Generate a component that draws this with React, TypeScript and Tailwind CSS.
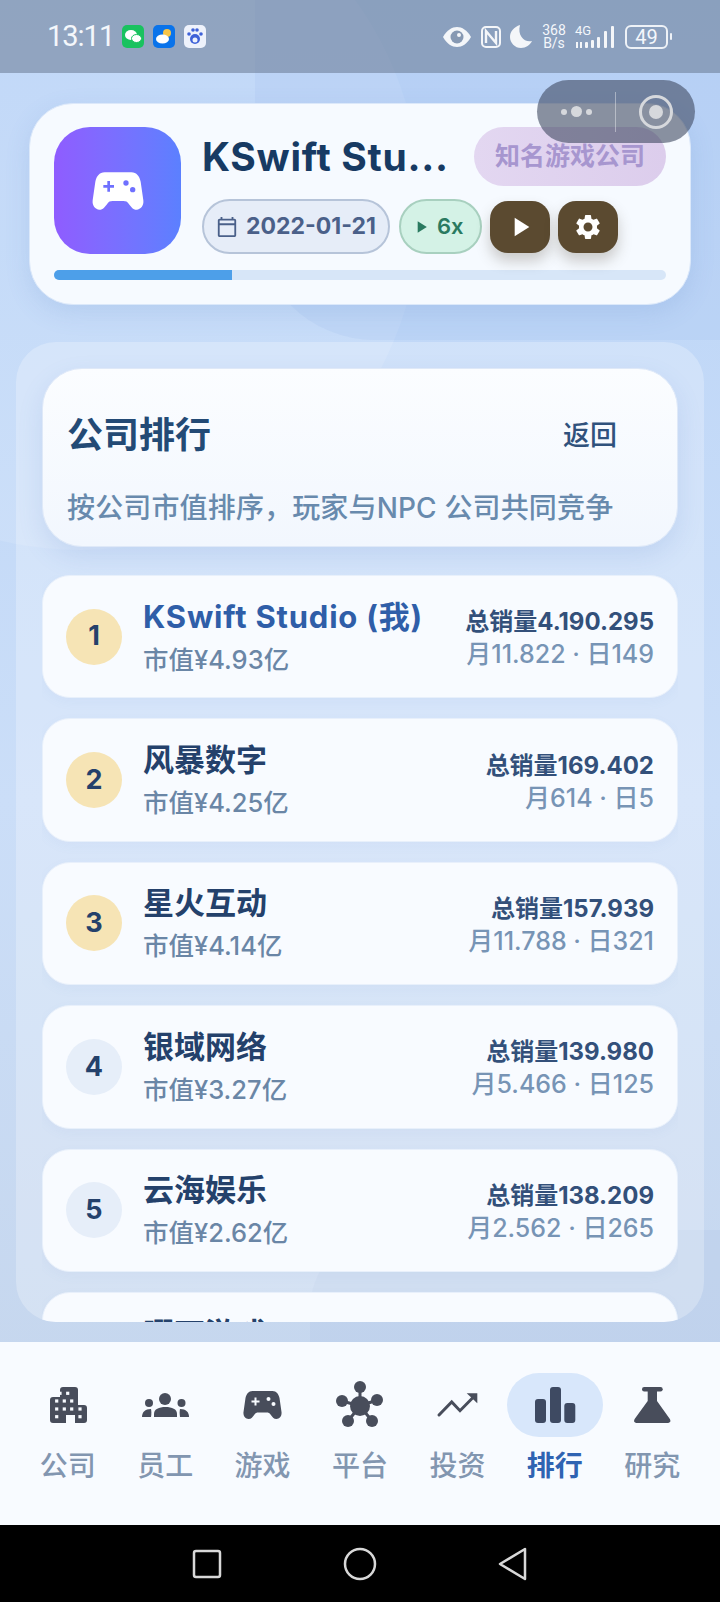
import React from "react";
import { MdPlayArrow, MdSettings, MdOutlineCalendarToday } from "react-icons/md";

const rows = [
  { n: 1, name: "KSwift Studio (我)", cap: "市值¥4.93亿", total: "总销量4.190.295", sub: "月11.822 · 日149", me: true },
  { n: 2, name: "风暴数字", cap: "市值¥4.25亿", total: "总销量169.402", sub: "月614 · 日5" },
  { n: 3, name: "星火互动", cap: "市值¥4.14亿", total: "总销量157.939", sub: "月11.788 · 日321" },
  { n: 4, name: "银域网络", cap: "市值¥3.27亿", total: "总销量139.980", sub: "月5.466 · 日125" },
  { n: 5, name: "云海娱乐", cap: "市值¥2.62亿", total: "总销量138.209", sub: "月2.562 · 日265" },
  { n: 6, name: "曜石游戏", cap: "市值¥2.11亿", total: "总销量120.114", sub: "月1.204 · 日96" },
];

const padPath = "M9 0H29C33 0 35 3 36 7L38 21C38.5 25 36 28 33 28C30 28 29 26 27 23.500C26 22 25 21.500 23 21.500H15C13 21.500 12 22 11 23.500C9 26 8 28 5 28C2 28 -0.500 25 0 21L2 7C3 3 5 0 9 0Z";

function Pad({ w, h, fill, hole }: { w: number; h: number; fill: string; hole: string }) {
  return (
    <svg width={w} height={h} viewBox="-0.5 0 39 28">
      <path d={padPath} fill={fill} />
      <path d="M12 6.500V14.500M8 10.500H16" stroke={hole} strokeWidth="2" />
      <circle cx="25" cy="8" r="2" fill={hole} />
      <circle cx="30" cy="13" r="2" fill={hole} />
    </svg>
  );
}

const C = "#484d5b";
const win = [[16, 12.3], [23.7, 12.3], [12.7, 20], [20.3, 20], [27.7, 20], [12.7, 28], [20.3, 28], [27.7, 28], [36, 28], [12.7, 35.7], [36, 35.7]];

const BuildingIcon = () => (
  <svg width="48" height="48" viewBox="0 0 48 48">
    <path d="M19 6H31C33 6 34 7 34 9V24H40C42 24 43 25 43 27V39C43 41 42 42 40 42H31V34H22V42H9C7 42 6 41 6 39V19C6 17 7 16 9 16H16V9C16 7 17 6 19 6Z" fill={C} />
    {win.map(([x, y]) => <rect key={`${x}-${y}`} x={x - 1.6} y={y - 1.6} width="3.2" height="3.2" fill="#f8fbff" />)}
  </svg>
);
const GroupIcon = () => (
  <svg width="48" height="48" viewBox="0 0 48 48" fill={C}>
    <circle cx="24" cy="18" r="6" /><circle cx="8" cy="22" r="4" /><circle cx="40.500" cy="22" r="4" />
    <path d="M13 36V33C13 28 18 26 24.500 26C31 26 36 28 36 33V36Z" />
    <path d="M1 36C1 31 4 28 10 28C10.500 30 10.500 33 10 36Z" />
    <path d="M48 36C48 31 45 28 39 28C38.500 30 38.500 33 39 36Z" />
  </svg>
);
const PadIcon = () => (
  <div className="w-[48px] h-[48px] flex items-center justify-center"><Pad w={39} h={28} fill={C} hole="#f8fbff" /></div>
);
const HubIcon = () => (
  <svg width="48" height="48" viewBox="0 0 48 48" fill={C}>
    <path d="M24 25L24 6M24 25L6 20M24 25L12 40M24 25L41 19M24 25L36 40" stroke={C} strokeWidth="3" />
    <circle cx="24" cy="25" r="10" /><circle cx="24" cy="6" r="6" /><circle cx="6" cy="20" r="6" /><circle cx="12" cy="40" r="6" /><circle cx="41" cy="19" r="6" /><circle cx="36" cy="40" r="6" />
  </svg>
);
const TrendIcon = () => (
  <svg width="48" height="48" viewBox="0 0 48 48">
    <path d="M6 34L18.700 21L27 29.700L41 15.500" fill="none" stroke={C} strokeWidth="3" strokeLinecap="round" />
    <path d="M33.700 12.300H44.300V22.300Z" fill={C} />
  </svg>
);
const BarsIcon = () => (
  <svg width="48" height="48" viewBox="0 0 48 48" fill="#3e4a62">
    <rect x="4" y="18" width="11" height="24" rx="3" /><rect x="19" y="6" width="11" height="36" rx="3" /><rect x="33.300" y="22" width="11" height="20" rx="3" />
  </svg>
);
const FlaskIcon = () => (
  <svg width="48" height="48" viewBox="0 0 48 48" fill={C}>
    <rect x="14" y="6" width="20.700" height="4.500" rx="2.200" />
    <path d="M19.700 10V20L7 37.500C5 40.500 6.500 42 9.500 42H39C42 42 43.500 40.500 41.500 37.500L29 20V10Z" />
  </svg>
);

const tabs = [
  { label: "公司", Icon: BuildingIcon },
  { label: "员工", Icon: GroupIcon },
  { label: "游戏", Icon: PadIcon },
  { label: "平台", Icon: HubIcon },
  { label: "投资", Icon: TrendIcon },
  { label: "排行", Icon: BarsIcon, active: true },
  { label: "研究", Icon: FlaskIcon },
];

function Row({ r }: { r: (typeof rows)[number] }) {
  return (
    <div className="shrink-0 h-[123.4px] rounded-[28px] bg-[#f8fbff] border border-[#e8f0fb] flex items-center pl-[23px] pr-[23px] shadow-[0_4px_12px_rgba(90,130,190,0.05)]">
      <div className={`w-[56px] h-[56px] shrink-0 rounded-full flex items-center justify-center text-[27px] font-bold text-[#24416b] ${r.n <= 3 ? "bg-[#f6e4b5]" : "bg-[#e6eef9]"}`}>{r.n}</div>
      <div className="ml-[21px] flex flex-col flex-1 min-w-0">
        <div className={`text-[31px] leading-[44px] font-bold whitespace-nowrap ${r.me ? "text-[#2f5ea8] tracking-[0.8px]" : "text-[#24416b]"}`}>{r.name}</div>
        <div className="mt-[2px] text-[25.500px] leading-[38px] font-medium text-[#6a86a6]">{r.cap}</div>
      </div>
      <div className="flex flex-col items-end shrink-0 mt-[3px]">
        <div className="text-[24px] leading-[32px] font-bold text-[#33507a] whitespace-nowrap">{r.total}</div>
        <div className="text-[25px] leading-[32px] font-medium text-[#7794b5] whitespace-nowrap">{r.sub}</div>
      </div>
    </div>
  );
}

function StatusBar() {
  return (
    <div className="relative z-10 h-[73px] shrink-0 bg-[#5f6f87]/50 flex items-center pl-[47px] pr-[48px] text-[#f4f7fb]">
      <span className="font-['Roboto',sans-serif] text-[29px] font-normal tracking-[-1px] w-[75px] leading-none">13:11</span>
      <div className="flex items-center gap-[9px]">
        <svg width="22" height="23" viewBox="0 0 22 23"><rect width="22" height="23" rx="5" fill="#19c25f" /><ellipse cx="9" cy="10" rx="6" ry="5" fill="#fff" /><ellipse cx="14.500" cy="13.500" rx="5" ry="4" fill="#fff" stroke="#19c25f" /></svg>
        <svg width="22" height="23" viewBox="0 0 22 23"><rect width="22" height="23" rx="5" fill="#0a73ea" /><circle cx="14" cy="8" r="4" fill="#f7c548" /><ellipse cx="9.500" cy="14" rx="6.500" ry="4.500" fill="#fff" /></svg>
        <svg width="22" height="23" viewBox="0 0 22 23"><rect width="22" height="23" rx="5" fill="#eef2fb" /><ellipse cx="11" cy="14" rx="5" ry="5" fill="#3f62d8" /><ellipse cx="11" cy="15" rx="2.500" ry="2.500" fill="#eef2fb" /><circle cx="5" cy="9" r="1.800" fill="#3f62d8" /><circle cx="9" cy="5" r="1.800" fill="#3f62d8" /><circle cx="13" cy="5" r="1.800" fill="#3f62d8" /><circle cx="17" cy="9" r="1.800" fill="#3f62d8" /></svg>
      </div>
      <div className="ml-auto flex items-center font-['Roboto',sans-serif]">
        <svg width="30" height="22" viewBox="0 0 30 22"><path d="M1 11C5 4 10 1 15 1s10 3 14 10c-4 7-9 10-14 10S5 18 1 11z" fill="#f4f6f9" /><circle cx="15" cy="11" r="6.500" fill="#8799b3" /><circle cx="17" cy="9" r="2" fill="#f4f6f9" /></svg>
        <svg className="ml-[9px]" width="20" height="22" viewBox="0 0 20 22"><rect x="1" y="1" width="18" height="20" rx="4" fill="none" stroke="#f4f6f9" strokeWidth="2" /><path d="M5 17V5l10 12V5" fill="none" stroke="#f4f6f9" strokeWidth="2.400" /></svg>
        <svg className="ml-[9px]" width="22" height="23" viewBox="0 0 22 23"><path d="M10 0C4 2 0 6.500 0 12c0 6 5 11 11 11 5 0 9-3 11-7-7 2-15-5-12-16z" fill="#f4f6f9" /></svg>
        <div className="ml-[9px] w-[26px] text-center text-[14px] leading-[13px]"><div>368</div><div>B/s</div></div>
        <div className="ml-[8px] relative w-[41px] h-[24px]">
          <span className="absolute left-0 -top-[1px] text-[13px] leading-none">4G</span>
          <svg className="absolute inset-0" width="41" height="24" viewBox="0 0 41 24"><g fill="#f4f6f9"><rect x="1" y="17" width="2" height="6" /><rect x="5" y="17" width="2" height="6" /><rect x="10" y="17" width="3" height="6" rx="1" /><rect x="16" y="15" width="3" height="8" rx="1" /><rect x="22" y="12" width="3" height="11" rx="1" /><rect x="29" y="6" width="3" height="17" rx="1" /><rect x="36" y="1" width="3" height="22" rx="1" /></g></svg>
        </div>
        <div className="ml-[9px] w-[43px] h-[24px] rounded-[6px] border-2 border-[#eef2f7] flex items-center justify-center text-[20px] leading-none">49</div>
        <div className="ml-[2px] w-[2px] h-[7px] rounded-full bg-[#eef2f7]" />
      </div>
    </div>
  );
}

export default function App() {
  return (
    <div className="font-['Inter','Noto_Sans_CJK_SC',sans-serif] relative w-[720px] h-[1602px] overflow-hidden flex flex-col bg-gradient-to-b from-[#bad4f7] via-[#cbdef8] to-[#c4d4ea]">
      {/* background decoration */}
      <div className="absolute -left-[260px] -top-[140px] w-[680px] h-[690px] rounded-full bg-white/10" />
      <div className="absolute left-[255px] -top-[300px] w-[640px] h-[640px] rounded-[120px] bg-[#a8c4ee]/25" />
      <div className="absolute left-[310px] top-[1230px] w-[520px] h-[300px] rounded-[80px] bg-[#b4c8e8]/30" />

      <StatusBar />

      {/* mini program capsule */}
      <div className="absolute z-20 left-[537px] top-[80px] w-[158px] h-[63px] rounded-full bg-[#3f4a60]/60 flex items-center">
        <div className="w-[78px] flex items-center justify-center gap-[4px]">
          <span className="w-[6px] h-[6px] rounded-full bg-[#d6d8dc]" />
          <span className="w-[11px] h-[11px] rounded-full bg-[#d6d8dc]" />
          <span className="w-[6px] h-[6px] rounded-full bg-[#d6d8dc]" />
        </div>
        <div className="w-px h-[40px] bg-white/40" />
        <div className="ml-[23px] w-[34px] h-[34px] rounded-full border-[3px] border-[#d6d8dc] flex items-center justify-center">
          <span className="w-[14px] h-[14px] rounded-full bg-[#d6d8dc]" />
        </div>
      </div>

      <main className="relative flex-1 min-h-0 flex flex-col">
        {/* header card */}
        <section className="mt-[30px] ml-[29px] mr-[29px] h-[202px] shrink-0 rounded-[44px] bg-[#f6faff] border border-[#dbe8fa] shadow-[0_8px_24px_rgba(90,130,200,0.16)] px-[24px] pt-[23px]">
          <div className="flex">
            <div className="w-[127px] h-[127px] shrink-0 rounded-[36px] bg-gradient-to-r from-[#8f5cff] to-[#5b80ff] flex items-center justify-center">
              <Pad w={52} h={38} fill="#fff" hole="#6f70ff" />
            </div>
            <div className="ml-[21px] flex-1 min-w-0">
              <div className="flex items-start justify-between">
                <div className="text-[39px] leading-[60px] font-bold tracking-[0.7px] text-[#173a63] whitespace-nowrap">KSwift Stu...</div>
                <div className="h-[59px] w-[192px] rounded-full bg-gradient-to-r from-[#e3d7f1] to-[#dccdec] flex items-center justify-center text-[25px] font-bold text-[#a796cf]">知名游戏公司</div>
              </div>
              <div className="mt-[12px] flex items-center">
                <div className="h-[55px] w-[188px] rounded-full bg-[#e6edf8] border-2 border-[#b6c4d9] flex items-center pl-[12px] gap-[8px] text-[23px] font-bold text-[#4a6089] whitespace-nowrap">
                  <MdOutlineCalendarToday size={22} className="text-[#4a6089] shrink-0" />
                  2022-01-21
                </div>
                <div className="ml-[9px] h-[55px] w-[83px] rounded-full bg-[#d4f2e6] border-2 border-[#a8d0bf] flex items-center pl-[10px] gap-[6px] text-[22px] font-semibold text-[#2a7a60]">
                  <MdPlayArrow size={20} className="shrink-0" />
                  6x
                </div>
                <div className="ml-[8px] w-[60px] h-[52px] rounded-[18px] bg-[#5b4a30] flex items-center justify-center text-white shadow-[0_8px_14px_rgba(70,60,40,0.25)]"><MdPlayArrow size={32} /></div>
                <div className="ml-[8px] w-[60px] h-[52px] rounded-[18px] bg-[#5b4a30] flex items-center justify-center text-white shadow-[0_8px_14px_rgba(70,60,40,0.25)]"><MdSettings size={30} /></div>
              </div>
            </div>
          </div>
          <div className="mt-[16px] h-[10px] rounded-full bg-[#d7e6f8] overflow-hidden">
            <div className="h-full w-[178px] bg-[#4d9fe9]" />
          </div>
        </section>

        {/* panel */}
        <section className="mt-[37px] mx-[16px] mb-[20px] flex-1 min-h-0 rounded-[40px] bg-white/25 flex flex-col pt-[26px] px-[26px] overflow-hidden">
          <div className="shrink-0 h-[179px] rounded-[40px] bg-gradient-to-b from-[#fbfdff] to-[#f2f7fe] border border-[#dfe9f8] shadow-[0_10px_24px_rgba(90,130,200,0.15)] px-[24px] pt-[44px]">
            <div className="flex items-center justify-between h-[44px]">
              <div className="text-[36px] font-bold text-[#234a75] leading-none">公司排行</div>
              <div className="mr-[36px] text-[27px] font-medium text-[#30527c] leading-none">返回</div>
            </div>
            <div className="mt-[31px] text-[28px] leading-[40px] font-medium tracking-[0.15px] text-[#688aad] whitespace-nowrap">按公司市值排序，玩家与NPC 公司共同竞争</div>
          </div>
          <div className="mt-[28px] flex-1 min-h-0 overflow-hidden flex flex-col gap-[20px]">
            {rows.map((r) => <Row key={r.n} r={r} />)}
          </div>
        </section>
      </main>

      {/* bottom nav */}
      <nav className="relative h-[183px] shrink-0 bg-[#f8fbff] grid grid-cols-7 px-[19px]">
        {tabs.map(({ label, Icon, active }) => (
          <div key={label} className="flex flex-col items-center pt-[31px]">
            <div className={`w-[96px] h-[64px] rounded-[32px] flex items-center justify-center ${active ? "bg-[#d8e7fb]" : ""}`}>
              <Icon />
            </div>
            <div className={`mt-[13px] text-[28px] leading-[32px] ${active ? "font-bold text-[#2f63b2]" : "font-medium text-[#8296b0]"}`}>{label}</div>
          </div>
        ))}
      </nav>

      {/* android nav bar */}
      <div className="relative h-[77px] shrink-0 bg-black flex items-center justify-center gap-[121px]">
        <svg width="30" height="30" viewBox="0 0 30 30"><rect x="2" y="2" width="26" height="26" rx="2" fill="none" stroke="#d8d8d8" strokeWidth="2.500" /></svg>
        <svg width="34" height="34" viewBox="0 0 34 34"><circle cx="17" cy="17" r="15" fill="none" stroke="#d8d8d8" strokeWidth="2.500" /></svg>
        <svg width="30" height="34" viewBox="0 0 30 34"><path d="M27 2v30L2 17z" fill="none" stroke="#d8d8d8" strokeWidth="2.500" strokeLinejoin="round" /></svg>
      </div>
    </div>
  );
}
